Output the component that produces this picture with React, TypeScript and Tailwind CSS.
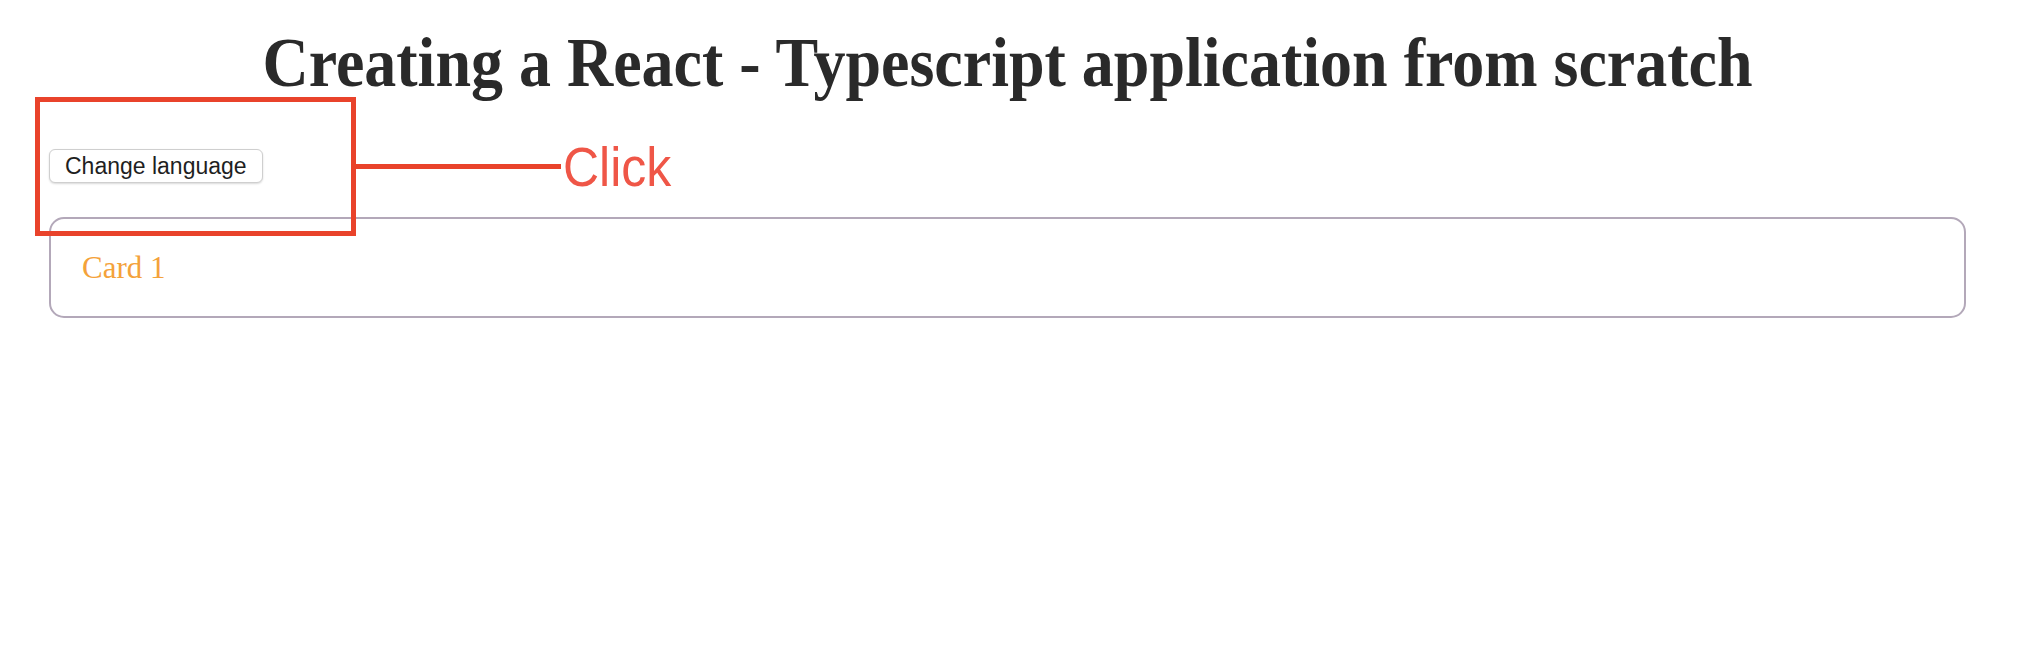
const serif = { fontFamily: '"Liberation Serif", "Times New Roman", serif' };

function Card({ title }: { title: string }) {
  return (
    <div className="flex h-[101px] items-start rounded-[15px] border-2 border-[#b3a8b9] pl-[31px] pt-[33px]">
      <h2 className="text-[31px] leading-none font-normal text-[#f4a23a] font-['Liberation_Serif',serif]">
        {title}
      </h2>
    </div>
  );
}

function ClickHint() {
  // annotation drawn over the screenshot
  return (
    <div className="absolute left-[35px] top-[97px] flex items-center">
      <div className="h-[139px] w-[321px] border-[5px] border-[#e9432b]" />
      <div className="-ml-[1px] h-[5px] w-[206px] bg-[#e9432b]" />
      <span className="ml-[2px] origin-center scale-y-[1.12] text-[50px] leading-none text-[#ef5647] font-['Liberation_Sans',Arial,sans-serif]">
        Click
      </span>
    </div>
  );
}

export default function App() {
  return (
    <div className="relative min-h-[664px] bg-white">
      <div className="flex flex-col pl-[49px] pr-[60px] pt-[28px]">
        <h1
          className="origin-bottom scale-y-[1.08] text-center text-[64px] font-bold leading-[76px] text-[#2a2a2a]"
          style={serif}
        >
          Creating a React - Typescript application from scratch
        </h1>
        <div className="mt-[45px] flex">
          <button className="h-[34px] rounded-[6px] border border-[#cfcfcf] bg-white px-[15px] text-[23px] leading-none text-[#1f1f1f] shadow-[0_1px_2px_rgba(0,0,0,0.15)] font-['Liberation_Sans',Arial,sans-serif]">
            Change language
          </button>
        </div>
        <div className="mt-[34px]">
          <Card title="Card 1" />
        </div>
      </div>
      <ClickHint />
    </div>
  );
}
